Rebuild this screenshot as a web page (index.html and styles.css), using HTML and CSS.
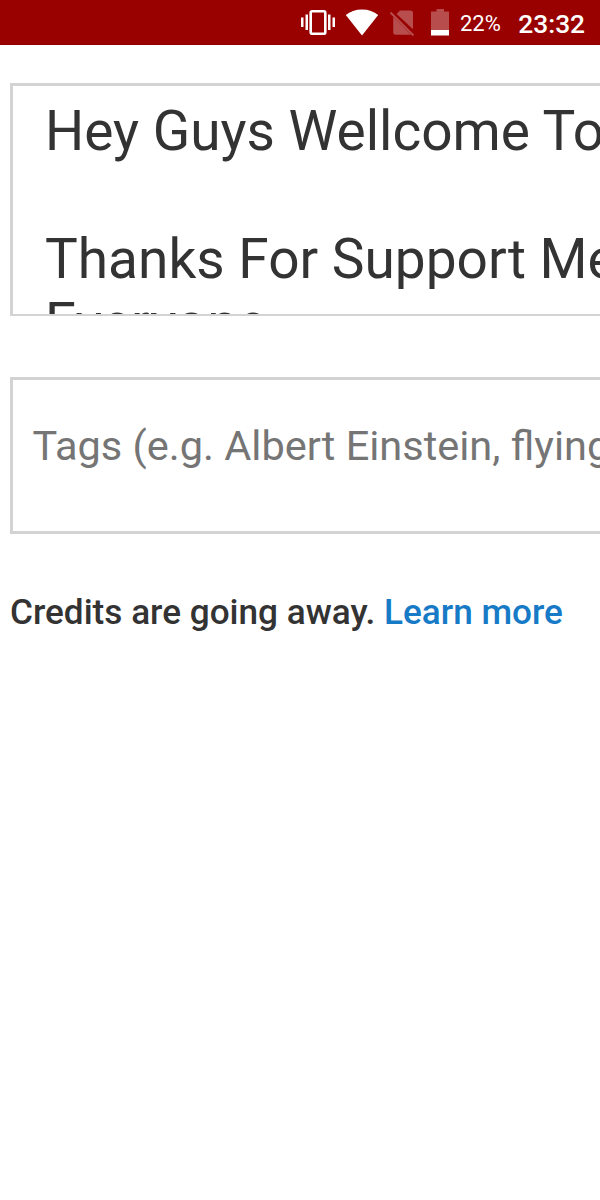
FILE: index.html
```
<!DOCTYPE html>
<html lang="en">
<head>
    <meta charset="UTF-8">
    <meta name="viewport" content="width=device-width, initial-scale=1.0">
    <title>Upload details</title>
    <link rel="stylesheet" href="styles.css">
</head>
<body>

    <div class="status-bar">
        <svg class="vibrate" width="34" height="28" viewBox="0 0 34 28">
            <path fill="#fff" d="M0 9.500h2.500v9.500H0zM4.500 6.500H7v15.500H4.500zM27 6.500h2.500v15.500H27zM31.500 9.500H34v9.500h-2.500z"/>
            <rect x="9.700" y="3.200" width="14.600" height="22.600" rx="1.500" fill="none" stroke="#fff" stroke-width="2.600"/>
        </svg>
        <svg class="wifi" width="34" height="28" viewBox="0 0 34 28">
            <path fill="#fff" d="M17 27.500L0.800 7C5 3.500 10.500 1.500 17 1.500s12 2 16.200 5.500z"/>
        </svg>
        <svg class="no-sim" width="26" height="28" viewBox="0 0 26 28">
            <path fill="#b84d4d" d="M11 2.500h10.500q2.500 0 2.500 2.500v16.300L7.600 5.900zM4.200 8.800L22 26.800H6.700q-2.500 0-2.500-2.500z"/>
            <path stroke="#b84d4d" stroke-width="2" d="M1.500 4.500l23 23"/>
        </svg>
        <svg class="battery" width="18" height="28" viewBox="0 0 18 28">
            <path fill="#b84d4d" d="M5.500 1h7.500v2.500h5V22H0V3.500h5.500z"/>
            <path fill="#fff" d="M0 22h18v5.500H0z"/>
        </svg>
        <span class="percent">22%</span>
        <span class="clock">23:32</span>
    </div>

    <div class="form">
        <div class="field description">
            <p>Hey Guys Wellcome To</p>
            <p>&nbsp;</p>
            <p>Thanks For Support Me</p>
            <p>Everyone</p>
        </div>
        <div class="field tags">Tags (e.g. Albert Einstein, flying</div>
        <p class="credits">Credits are going away. <a href="#">Learn more</a></p>
    </div>

</body>
</html>
```
FILE: styles.css
```
body {
    font-family: Roboto, Arial, sans-serif;
    background-color: #fff;
    color: #333;
    margin: 0;
    height: 1200px;
    overflow: hidden;
}

.status-bar {
    display: flex;
    align-items: center;
    height: 45px;
    padding-left: 301px;
    background-color: #990000;
    color: #fff;
}

.status-bar svg {
    margin-bottom: 1px;
}

.wifi {
    margin-left: 10px;
}

.no-sim {
    margin-left: 10px;
}

.battery {
    margin-left: 16px;
}

.percent {
    margin-left: 11px;
    padding-top: 2px;
    font-size: 22px;
}

.clock {
    margin-left: 17.500px;
    padding-top: 2px;
    font-size: 26.300px;
    font-weight: 500;
}

.form {
    padding: 38px 0 0 10px;
}

.field {
    box-sizing: border-box;
    width: 600px;
    border: 3px solid #d3d3d3;
    white-space: nowrap;
    overflow: hidden;
}

.description {
    height: 233px;
    padding: 13px 0 0 32px;
    border-bottom-width: 2px;
    font-size: 55px;
    line-height: 64px;
}

.description p {
    margin: 0;
}

.tags {
    height: 157px;
    margin-top: 61px;
    padding: 40px 0 0 19.500px;
    color: #757575;
    font-size: 41.500px;
    line-height: 52px;
}

.credits {
    margin: 58px 0 0;
    font-size: 35.150px;
    font-weight: 500;
    line-height: 40px;
    white-space: nowrap;
}

.credits a {
    color: #167ac6;
    text-decoration: none;
}
```
